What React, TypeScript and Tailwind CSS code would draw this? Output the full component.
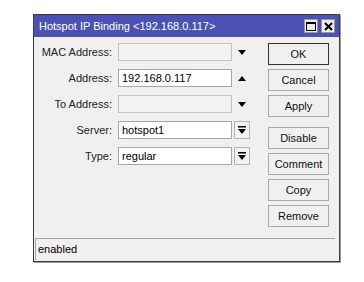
import React from "react";

const font = { fontFamily: '"Liberation Sans", Arial, sans-serif' };

function ArrowDown() {
  return (
    <svg width="8" height="5" viewBox="0 0 8 5">
      <path d="M0 0H8L4 5Z" fill="#000" />
    </svg>
  );
}

function ArrowUp() {
  return (
    <svg width="8" height="5" viewBox="0 0 8 5">
      <path d="M0 5H8L4 0Z" fill="#000" />
    </svg>
  );
}

function PickButton() {
  return (
    <div className="w-[16px] h-[18px] border border-[#b4b4b4] bg-[#f3f3f3] flex items-center justify-center">
      <svg width="8" height="8" viewBox="0 0 8 8">
        <rect x="0" y="0" width="8" height="1.5" fill="#000" />
        <path d="M0 3H8L4 8Z" fill="#000" />
      </svg>
    </div>
  );
}

type Row = {
  label: string;
  value: string;
  disabled?: boolean;
  side: "down" | "up" | "pick";
};

const rows: Row[] = [
  { label: "MAC Address:", value: "", disabled: true, side: "down" },
  { label: "Address:", value: "192.168.0.117", side: "up" },
  { label: "To Address:", value: "", disabled: true, side: "down" },
  { label: "Server:", value: "hotspot1", side: "pick" },
  { label: "Type:", value: "regular", side: "pick" },
];

function Button({ children, primary }: { children: React.ReactNode; primary?: boolean }) {
  return (
    <div
      className={`w-[61px] h-[22px] flex items-center justify-center text-[11px] text-[#111] bg-[#f0f0f0] border ${
        primary ? "border-[#333]" : "border-[#a9a9a9]"
      }`}
    >
      {children}
    </div>
  );
}

export default function App() {
  return (
    <div className="w-[364px] h-[282px] bg-white pt-[14px] pl-[33px]" style={font}>
      <div className="w-[307px] h-[248px] border border-[#3a3a3a] bg-[#f0f0f0] flex flex-col shadow-[1px_1px_0_#9a9a9a]">
        {/* Title bar */}
        <div className="h-[22px] bg-[#4a52b4] flex items-center pl-[5px] pr-[4px]">
          <span className="text-[11px] text-white flex-1 leading-none">Hotspot IP Binding &lt;192.168.0.117&gt;</span>
          <div className="flex gap-[3px]">
            <div className="w-[14px] h-[14px] bg-[#ececec] border border-[#9a9a9a] flex items-center justify-center">
              <svg width="10" height="9" viewBox="0 0 10 9">
                <rect x="0.5" y="0.5" width="9" height="8" fill="none" stroke="#000" />
                <rect x="0" y="0" width="10" height="2" fill="#000" />
              </svg>
            </div>
            <div className="w-[14px] h-[14px] bg-[#ececec] border border-[#9a9a9a] flex items-center justify-center">
              <svg width="9" height="9" viewBox="0 0 9 9">
                <path d="M1 1L8 8M8 1L1 8" stroke="#000" strokeWidth="2" />
              </svg>
            </div>
          </div>
        </div>

        {/* Body */}
        <div className="flex pt-[6px]">
          <div className="flex flex-col gap-[8px]">
            {rows.map((r) => (
              <div key={r.label} className="flex items-center h-[18px]">
                <div className="w-[78px] text-right text-[11px] text-[#222]">{r.label}</div>
                <div
                  className={`ml-[6px] w-[114px] h-[18px] border flex items-center pl-[3px] text-[11px] text-black ${
                    r.disabled ? "bg-[#f3f3f3] border-[#c2c2c2]" : "bg-white border-[#a6a6a6]"
                  }`}
                >
                  {r.value}
                </div>
                <div className="ml-[2px] w-[16px] flex items-center justify-center">
                  {r.side === "down" && <ArrowDown />}
                  {r.side === "up" && <ArrowUp />}
                  {r.side === "pick" && <PickButton />}
                </div>
              </div>
            ))}
          </div>

          <div className="ml-[18px] flex flex-col">
            <div className="flex flex-col gap-[4px]">
              <Button primary>OK</Button>
              <Button>Cancel</Button>
              <Button>Apply</Button>
            </div>
            <div className="flex flex-col gap-[4px] mt-[10px]">
              <Button>Disable</Button>
              <Button>Comment</Button>
              <Button>Copy</Button>
              <Button>Remove</Button>
            </div>
          </div>
        </div>

        {/* Status bar */}
        <div className="mt-auto ml-[1px] mr-[4px] mb-[1px] h-[22px] border-t border-l border-[#a4a4a4] flex items-center pl-[2px] text-[11px] text-black">
          enabled
        </div>
      </div>
    </div>
  );
}
